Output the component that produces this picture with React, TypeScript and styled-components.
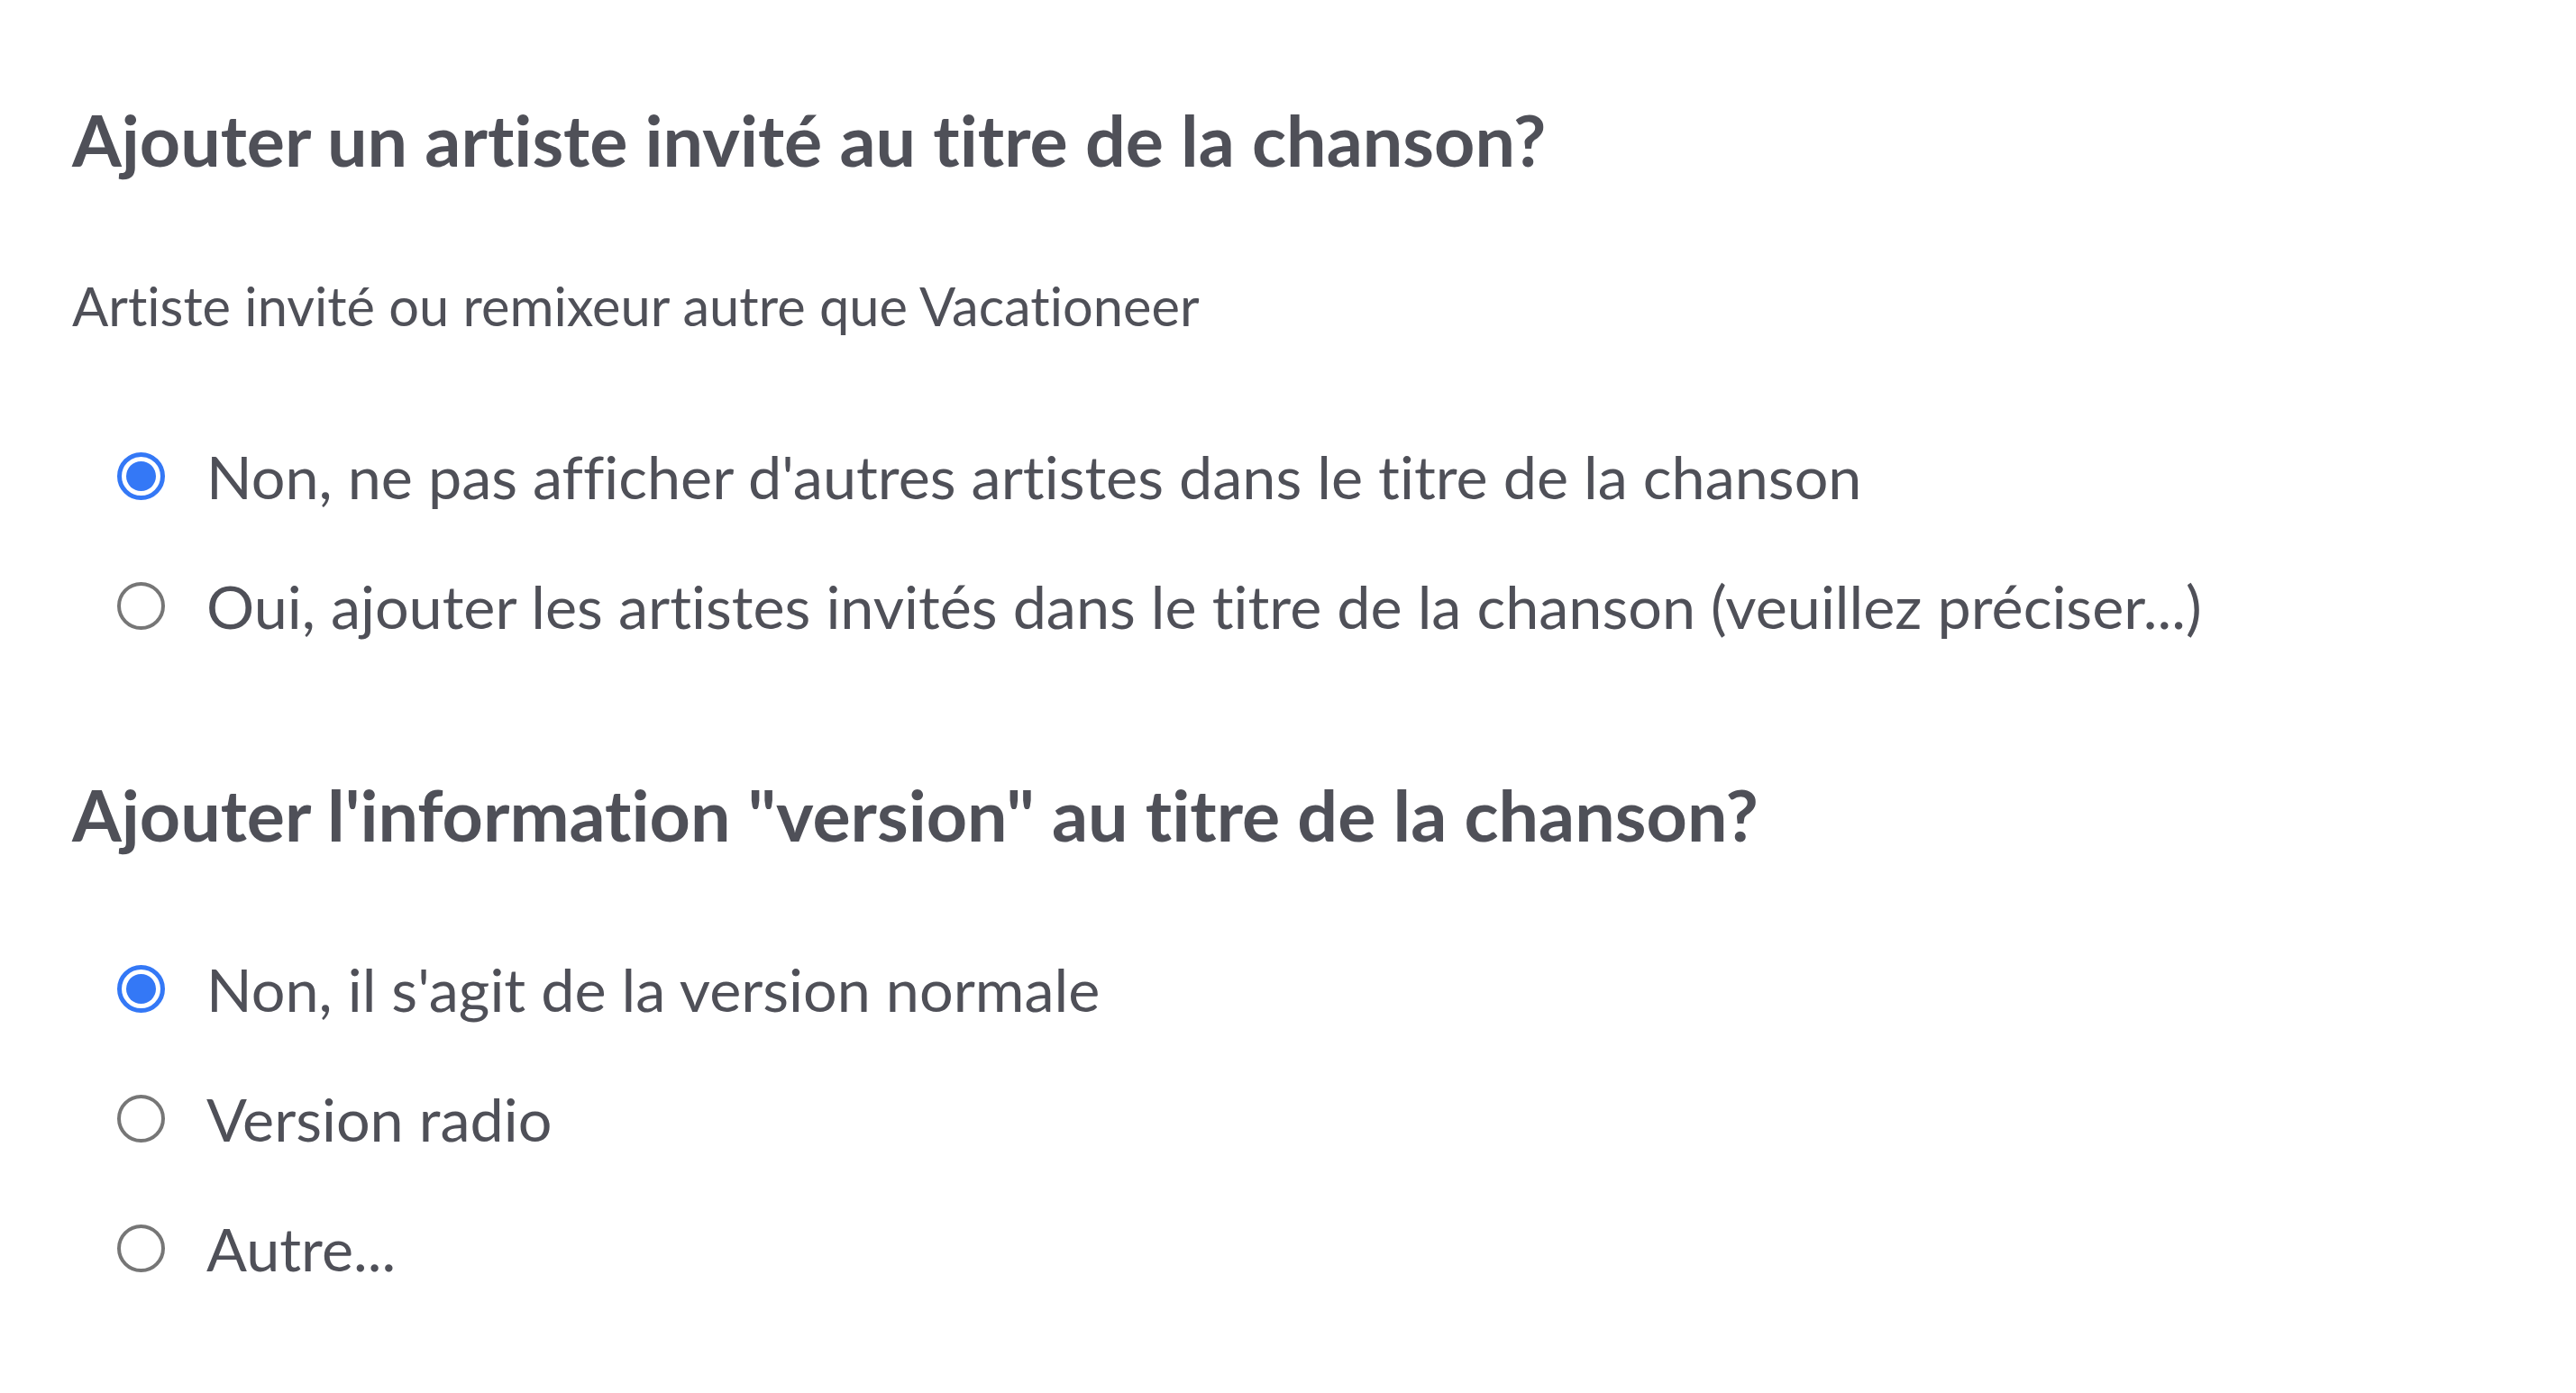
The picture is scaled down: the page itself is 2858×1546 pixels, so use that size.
import React, { useState } from "react";
import styled, { createGlobalStyle } from "styled-components";

const GlobalStyle = createGlobalStyle`
  html, body {
    margin: 0;
    padding: 0;
    background: #ffffff;
  }
  body {
    font-family: Lato, "Noto Sans", sans-serif;
    font-feature-settings: "liga" 0;
    color: #4f5058;
  }
`;

const Page = styled.div`
  padding: 108px 80px 40px 80px;
  display: flex;
  flex-direction: column;
`;

const Question = styled.section`
  display: flex;
  flex-direction: column;
  margin-bottom: 150px;

  &:last-child {
    margin-bottom: 0;
  }
`;

const Title = styled.h2`
  margin: 0;
  font-size: 79px;
  line-height: 94px;
  font-weight: 700;
  color: #4f5058;
`;

const Hint = styled.p`
  margin: 102px 0 0 0;
  font-size: 59.6px;
  line-height: 70px;
  font-weight: 400;
  color: #4f5058;
`;

const Options = styled.div<{ $gap: number }>`
  display: flex;
  flex-direction: column;
  gap: 74px;
  margin-top: ${(p) => p.$gap}px;
  padding-left: 50px;
`;

const Option = styled.label`
  display: flex;
  align-items: center;
  gap: 46px;
  cursor: pointer;
  font-size: 66.5px;
  line-height: 70px;
  color: #4f5058;
`;

const HiddenInput = styled.input`
  position: absolute;
  opacity: 0;
  width: 0;
  height: 0;
`;

const Dot = styled.span<{ $checked: boolean }>`
  box-sizing: border-box;
  flex: 0 0 auto;
  width: 53px;
  height: 53px;
  border-radius: 50%;
  border: ${(p) => (p.$checked ? "5px solid #3478f6" : "4px solid #767676")};
  display: flex;
  align-items: center;
  justify-content: center;

  &::after {
    content: "";
    width: 33px;
    height: 33px;
    border-radius: 50%;
    background: #3478f6;
    display: ${(p) => (p.$checked ? "block" : "none")};
  }
`;

interface RadioGroupProps {
  name: string;
  options: string[];
  value: number;
  topGap: number;
  onChange(index: number): void;
}

function RadioGroup(props: RadioGroupProps) {
  return (
    <Options $gap={props.topGap}>
      {props.options.map((label, i) => (
        <Option key={label}>
          <HiddenInput
            type="radio"
            name={props.name}
            checked={props.value === i}
            onChange={() => props.onChange(i)}
          />
          <Dot $checked={props.value === i} />
          {label}
        </Option>
      ))}
    </Options>
  );
}

export default function App() {
  const [guest, setGuest] = useState(0);
  const [version, setVersion] = useState(0);

  return (
    <>
      <GlobalStyle />
      <Page>
        <Question>
          <Title>Ajouter un artiste invité au titre de la chanson?</Title>
          <Hint>Artiste invité ou remixeur autre que Vacationeer</Hint>
          <RadioGroup
            name="guest"
            topGap={119}
            value={guest}
            onChange={setGuest}
            options={[
              "Non, ne pas afficher d'autres artistes dans le titre de la chanson",
              "Oui, ajouter les artistes invités dans le titre de la chanson (veuillez préciser...)",
            ]}
          />
        </Question>
        <Question>
          <Title>Ajouter l'information "version" au titre de la chanson?</Title>
          <RadioGroup
            name="version"
            topGap={111}
            value={version}
            onChange={setVersion}
            options={["Non, il s'agit de la version normale", "Version radio", "Autre..."]}
          />
        </Question>
      </Page>
    </>
  );
}
